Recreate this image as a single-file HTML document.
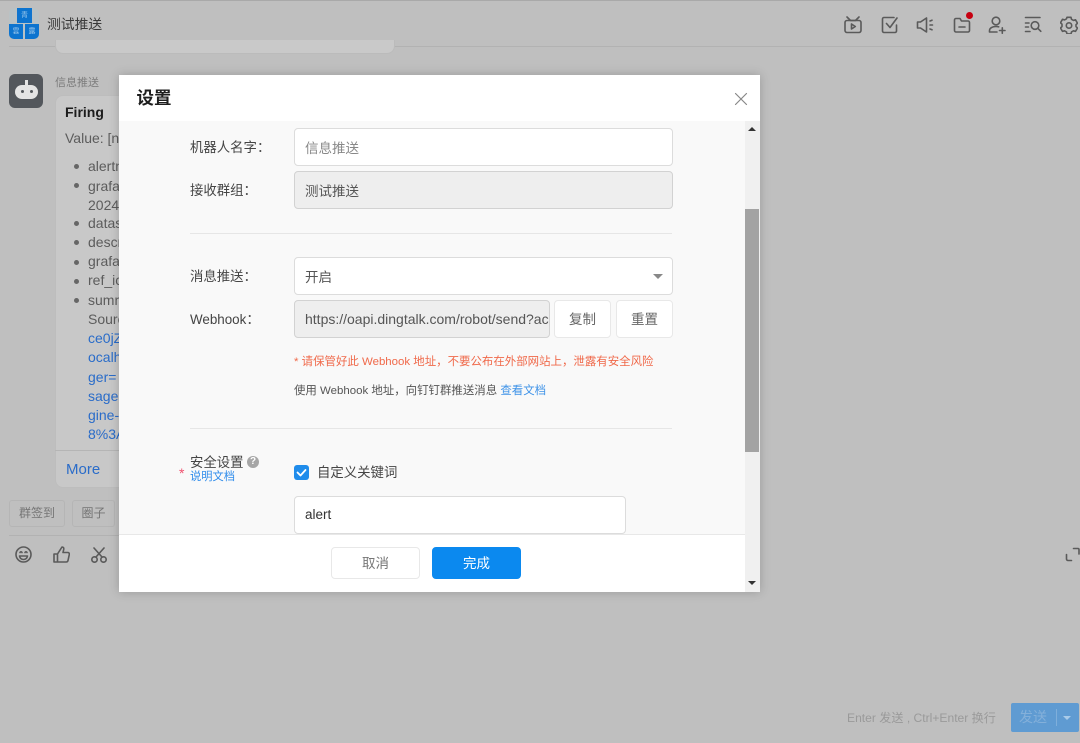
<!DOCTYPE html>
<html lang="zh"><head><meta charset="utf-8"><title>设置</title>
<style>
*{box-sizing:border-box}
html{background:#bfbfbf}
html,body{margin:0;padding:0}
body{width:1080px;height:743px;overflow:hidden;position:relative;background:#bfbfbf;font-family:"Liberation Sans","Noto Sans CJK SC",sans-serif;color:#333}
#w{position:absolute;left:0;top:0;width:1080px;height:743px;overflow:hidden;filter:blur(.3px)}
.a{position:absolute;white-space:nowrap}
.bgt{color:#5c5c5c;font-size:14px;line-height:19px}
.link{color:#2a6cc9}
.input{position:absolute;border:1px solid #dcdcdc;border-radius:4px;background:#fff;font-size:13.5px;color:#555;padding-left:10px;padding-bottom:1px;display:flex;align-items:center;white-space:nowrap;overflow:hidden}
.dis{background:#eee;border-color:#d2d2d2}
.lbl{position:absolute;font-size:13.4px;color:#444;white-space:nowrap;line-height:20px}
.btn{position:absolute;border:1px solid #e8e8e8;border-radius:4px;background:#fff;font-size:13.5px;color:#666;padding-bottom:2px;display:flex;align-items:center;justify-content:center}
hr{position:absolute;margin:0;border:0;border-top:1px solid #e6e6e6;left:71px;width:482px}
svg{position:absolute;fill:none;stroke:#5a5a5a;stroke-width:1.6;stroke-linecap:round;stroke-linejoin:round}
</style></head><body><div id="w">
<div class="a" style="left:0;top:0;width:1080px;height:1px;background:#a9a9a9"></div>
<div class="a" style="left:9px;top:46px;width:1071px;height:1px;background:#b2b2b2"></div>

<div class="a" style="left:9px;top:8px;width:30px;height:31px;background:#b9c2c5;border-radius:5px;overflow:hidden">
<div class="a" style="left:8px;top:0;width:15px;height:15px;background:#0d74cf;color:#9cc7ea;font-size:7px;text-align:center;line-height:15px">青</div>
<div class="a" style="left:0;top:16px;width:14px;height:15px;background:#0d74cf;color:#9cc7ea;font-size:7px;text-align:center;line-height:15px">雲</div>
<div class="a" style="left:16px;top:16px;width:14px;height:15px;background:#0d74cf;color:#9cc7ea;font-size:7px;text-align:center;line-height:15px">露</div>
</div>
<div class="a" style="left:47px;top:15px;font-size:13.8px;line-height:20px;color:#3a3a3a">测试推送</div>

<svg style="left:844px;top:16px" width="18" height="18" viewBox="0 0 18 18"><rect x="1" y="4.500" width="16" height="12" rx="2"/><path d="M3 1l3.500 3.500h5L15 1M7.500 8v5l3.800-2.500z"/></svg>
<svg style="left:881px;top:16px" width="18" height="18" viewBox="0 0 18 18"><path d="M15.500 9v6a1.500 1.500 0 0 1-1.500 1.500H3A1.500 1.500 0 0 1 1.500 15V3A1.500 1.500 0 0 1 3 1.500h10M5.500 7.500L9 11.500 16 2"/></svg>
<svg style="left:916px;top:16px" width="18" height="18" viewBox="0 0 18 18"><path d="M1.500 6h3l6-4v14l-6-4h-3zM14 5l2-.8M14 9h2.500M14 13l2 .8"/></svg>
<svg style="left:953px;top:16px" width="18" height="18" viewBox="0 0 18 18"><path d="M1.500 4A1.500 1.500 0 0 1 3 2.500h4l1.500 2.500H15A1.500 1.500 0 0 1 16.500 6.500v8A1.500 1.500 0 0 1 15 16H3A1.500 1.500 0 0 1 1.500 14.500zM6 11h6"/></svg>
<div class="a" style="left:966px;top:12px;width:7px;height:7px;border-radius:50%;background:#c70010"></div>
<svg style="left:988px;top:16px" width="18" height="18" viewBox="0 0 18 18"><circle cx="8" cy="5" r="3.800"/><path d="M1.500 16v-1.300C1.500 12 4.500 10.500 8 10.500c1 0 1.800.1 2.700.3M1.500 16h7.500M11.500 14.500H17M14.300 11.800v5.400"/></svg>
<svg style="left:1024px;top:16px" width="18" height="18" viewBox="0 0 18 18"><path d="M1.500 1.500h14.500M1.500 7h3.500M1.500 11h3M1.500 15.500h4.500"/><circle cx="11" cy="9.500" r="3.800"/><path d="M13.800 12.300l3 3"/></svg>
<svg style="left:1060px;top:16px" width="18" height="18" viewBox="0 0 18 18"><path d="M7 1.500h4l.5 2 2 1.100 2-.6 2 3.400-1.500 1.500v1.800l1.500 1.500-2 3.400-2-.6-2 1.100-.5 2H7l-.5-2-2-1.100-2 .6-2-3.400 1.500-1.500V8.400L.5 6.900l2-3.400 2 .6 2-1.100z" transform="translate(0 -.2)"/><circle cx="9" cy="9.500" r="2.700"/></svg>

<div class="a" style="left:55px;top:40px;width:340px;height:14px;background:#c9c9c9;border-radius:0 0 8px 8px;border:1px solid #bbb;border-top:0"></div>

<div class="a" style="left:9px;top:74px;width:34px;height:34px;background:#53575c;border-radius:6px"></div>
<div class="a" style="left:15px;top:85px;width:23px;height:14px;background:#e4e4e4;border-radius:8px"></div>
<div class="a" style="left:25px;top:80px;width:3px;height:6px;background:#e4e4e4"></div>
<div class="a" style="left:21px;top:90px;width:3px;height:3px;background:#53575c;border-radius:50%"></div>
<div class="a" style="left:30px;top:90px;width:3px;height:3px;background:#53575c;border-radius:50%"></div>
<div class="a" style="left:55px;top:76px;font-size:11px;line-height:15px;color:#7c7c7c">信息推送</div>

<div class="a" style="left:55px;top:95px;width:80px;height:393px;background:#c8c8c8;border:1px solid #bdbdbd;border-radius:8px"></div>
<div class="a" style="left:65px;top:103px;font-size:14px;line-height:18px;font-weight:bold;color:#1c1c1c">Firing</div>
<div class="a bgt" style="left:65px;top:129px">Value: [n</div>
<div class="a" style="left:74px;top:164px;width:5px;height:5px;border-radius:50%;background:#666"></div>
<div class="a" style="left:74px;top:183px;width:5px;height:5px;border-radius:50%;background:#666"></div>
<div class="a" style="left:74px;top:221px;width:5px;height:5px;border-radius:50%;background:#666"></div>
<div class="a" style="left:74px;top:240px;width:5px;height:5px;border-radius:50%;background:#666"></div>
<div class="a" style="left:74px;top:260px;width:5px;height:5px;border-radius:50%;background:#666"></div>
<div class="a" style="left:74px;top:279px;width:5px;height:5px;border-radius:50%;background:#666"></div>
<div class="a" style="left:74px;top:298px;width:5px;height:5px;border-radius:50%;background:#666"></div>
<div class="a bgt" style="left:88px;top:157px">alertn</div>
<div class="a bgt" style="left:88px;top:177px">grafa</div>
<div class="a bgt" style="left:88px;top:196px">2024</div>
<div class="a bgt" style="left:88px;top:214px">datas</div>
<div class="a bgt" style="left:88px;top:233px">descr</div>
<div class="a bgt" style="left:88px;top:252px">grafa</div>
<div class="a bgt" style="left:88px;top:271px">ref_ic</div>
<div class="a bgt" style="left:88px;top:291px">summ</div>
<div class="a bgt" style="left:88px;top:310px">Sourc</div>
<div class="a bgt link" style="left:88px;top:329px">ce0jZ</div>
<div class="a bgt link" style="left:88px;top:348px">ocalh</div>
<div class="a bgt link" style="left:88px;top:368px">ger=</div>
<div class="a bgt link" style="left:88px;top:387px">sage</div>
<div class="a bgt link" style="left:88px;top:406px">gine-</div>
<div class="a bgt link" style="left:88px;top:425px">8%3A</div>
<div class="a" style="left:55px;top:450px;width:70px;height:1px;background:#b5b5b5"></div>
<div class="a link" style="left:66px;top:460px;font-size:15px;line-height:19px">More</div>

<div class="a" style="left:9px;top:500px;width:56px;height:27px;border:1px solid #b5b5b5;border-radius:3px;font-size:12px;color:#757575;text-align:center;line-height:24px">群签到</div>
<div class="a" style="left:72px;top:500px;width:43px;height:27px;border:1px solid #b5b5b5;border-radius:3px;font-size:12px;color:#757575;text-align:center;line-height:24px">圈子</div>
<div class="a" style="left:9px;top:535px;width:110px;height:1px;background:#b2b2b2"></div>

<svg style="left:15px;top:546px" width="17" height="17" viewBox="0 0 17 17"><circle cx="8.500" cy="8.500" r="7.500"/><path d="M4.500 10h8c-.5 2.500-2 3.500-4 3.500s-3.500-1-4-3.500zM5 6.500c.5-1 1.500-1 2 0M10 6.500c.5-1 1.500-1 2 0"/></svg>
<svg style="left:53px;top:546px" width="17" height="17" viewBox="0 0 17 17"><path d="M1 8h3.500v8H1zM4.500 8L9 1c1.500 0 2 1 1.700 2.500L10 6.500h5c1 0 1.500 1 1.300 2l-1.300 6c-.2 1-.8 1.500-1.800 1.500H4.500"/></svg>
<svg style="left:91px;top:547px" width="16" height="16" viewBox="0 0 16 16"><circle cx="3.500" cy="12.500" r="2.700"/><circle cx="12.500" cy="12.500" r="2.700"/><path d="M5 10L13 1M11 10L3 1"/></svg>
<svg style="left:1065px;top:547px" width="15" height="15" viewBox="0 0 15 15"><path d="M1.500 7.500v4.500a1.500 1.500 0 0 0 1.500 1.500h3.500M8.500 1.500H13a1 1 0 0 1 1 1V7"/></svg>

<div class="a" style="left:847px;top:711px;font-size:12.100px;line-height:15px;color:#9a9a9a">Enter 发送 , Ctrl+Enter 换行</div>
<div class="a" style="left:1011px;top:703px;width:68px;height:29px;background:#5f9bd2;border-radius:2px"></div>
<div class="a" style="left:1019px;top:707px;font-size:14px;line-height:20px;color:#84b0da">发送</div>
<div class="a" style="left:1056px;top:709px;width:1px;height:17px;background:#7fafdb"></div>
<div class="a" style="left:1063px;top:716px;border:4px solid transparent;border-top:4px solid #a9cbe9;border-bottom:0"></div>

<!-- modal -->
<div class="a" style="left:119px;top:75px;width:641px;height:517px;background:#fff;box-shadow:0 0 10px rgba(0,0,0,.2);overflow:hidden;white-space:normal">
<div class="a" style="left:17.500px;top:11px;font-size:17.500px;line-height:24px;font-weight:bold;color:#1e1e1e">设置</div>
<svg style="left:615px;top:17px;stroke:#888;stroke-width:1.200" width="14" height="14" viewBox="0 0 14 14"><path d="M1.500 1.500l11 11M12.500 1.500l-11 11"/></svg>
<div class="a" style="left:0;top:46px;width:626px;height:413px;background:#f9f9f9"></div>
<div class="a" style="left:626px;top:46px;width:15px;height:471px;background:#f0f0f0"></div>
<div class="a" style="left:626px;top:134px;width:14px;height:243px;background:#a3a3a3"></div>
<div class="a" style="left:629px;top:52px;border:4px solid transparent;border-bottom:4px solid #333;border-top:0"></div>
<div class="a" style="left:629px;top:506px;border:4px solid transparent;border-top:4px solid #333;border-bottom:0"></div>

<div class="lbl" style="left:71px;top:63px">机器人名字：</div>
<div class="input" style="left:175px;top:53px;width:379px;height:38px;color:#888">信息推送</div>
<div class="lbl" style="left:71px;top:106px">接收群组：</div>
<div class="input dis" style="left:175px;top:96px;width:379px;height:38px">测试推送</div>
<hr style="top:158px">
<div class="lbl" style="left:71px;top:192px">消息推送：</div>
<div class="input" style="left:175px;top:182px;width:379px;height:38px">开启</div>
<div class="a" style="left:534px;top:199px;border:5px solid transparent;border-top:5px solid #888;border-bottom:0"></div>
<div class="lbl" style="left:71px;top:235px">Webhook：</div>
<div class="input dis" style="left:175px;top:225px;width:256px;height:38px;padding-right:0;font-size:14px"><span style="display:block;width:245px;overflow:hidden">https://oapi.dingtalk.com/robot/send?access</span></div>
<div class="btn" style="left:435px;top:225px;width:57px;height:38px">复制</div>
<div class="btn" style="left:497px;top:225px;width:57px;height:38px">重置</div>
<div class="a" style="left:175px;top:279px;font-size:11.450px;line-height:16px;color:#f0694a;white-space:nowrap">* 请保管好此 Webhook 地址，不要公布在外部网站上，泄露有安全风险</div>
<div class="a" style="left:175px;top:308px;font-size:11.450px;line-height:16px;color:#555;white-space:nowrap">使用 Webhook 地址，向钉钉群推送消息 <span style="color:#3f93e8">查看文档</span></div>
<hr style="top:353px">
<div class="a" style="left:60px;top:390px;font-size:14px;line-height:16px;color:#f0506e">*</div>
<div class="lbl" style="left:71px;top:378px">安全设置</div>
<div class="a" style="left:128px;top:381px;width:12px;height:12px;border-radius:50%;background:#a6a6a6;color:#fff;font-size:10px;line-height:12px;text-align:center;font-weight:bold">?</div>
<div class="a" style="left:71px;top:394px;font-size:11.250px;line-height:16px;color:#2f8ceb">说明文档</div>
<div class="a" style="left:175px;top:390px;width:15px;height:15px;border-radius:3px;background:#1f8ceb"></div>
<svg style="left:175px;top:390px;stroke:#fff;stroke-width:1.800" width="15" height="15" viewBox="0 0 15 15"><path d="M3.500 7.500l3 3 5-5.500"/></svg>
<div class="lbl" style="left:198px;top:388px">自定义关键词</div>
<div class="input" style="left:175px;top:421px;width:332px;height:38px;color:#333">alert</div>

<div class="a" style="left:0;top:459px;width:626px;height:58px;background:#fff;border-top:1px solid #e8e8e8"></div>
<div class="btn" style="left:212px;top:472px;width:89px;height:32px;color:#777">取消</div>
<div class="btn" style="left:313px;top:472px;width:89px;height:32px;background:#0b89ef;border-color:#0b89ef;color:#fff">完成</div>
</div>
</div></body></html>
